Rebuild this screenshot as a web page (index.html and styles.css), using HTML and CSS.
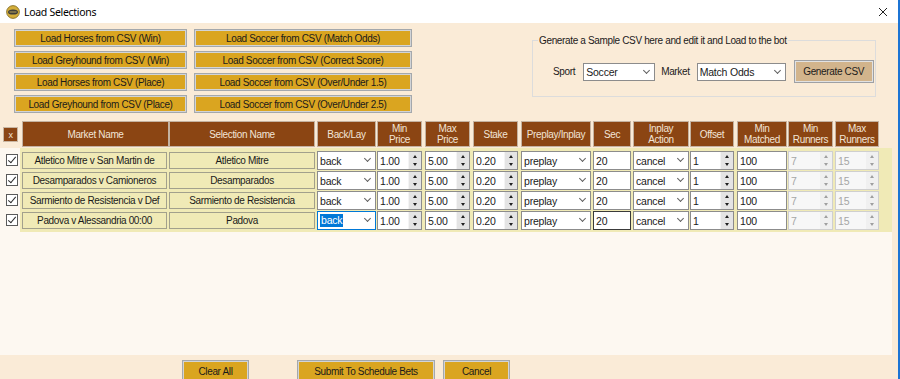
FILE: index.html
```html
<!DOCTYPE html>
<html>
<head>
<meta charset="utf-8">
<link rel="stylesheet" href="styles.css">
</head>
<body>
<div class="window">
  <div class="titlebar">
    <svg class="app-icon" viewBox="0 0 14 14" width="14" height="14">
      <circle cx="7" cy="7" r="6.4" fill="#d4ae3a" stroke="#7a6420" stroke-width="0.8"/>
      <ellipse cx="7" cy="7" rx="5" ry="2.6" fill="#3e3e3a"/>
      <rect x="3.5" y="6.5" width="7" height="1" fill="#b9a45a"/>
    </svg>
    <span class="title">Load Selections</span>
    <svg class="close" viewBox="0 0 8 8" width="8" height="8">
      <path d="M0 0L8 8M8 0L0 8" stroke="#222" stroke-width="1"/>
    </svg>
  </div>

  <div class="top">
    <div class="loadbtns">
      <div class="btn">Load Horses from CSV (Win)</div>
      <div class="btn">Load Soccer from CSV (Match Odds)</div>
      <div class="btn">Load Greyhound from CSV (Win)</div>
      <div class="btn">Load Soccer from CSV (Correct Score)</div>
      <div class="btn">Load Horses from CSV (Place)</div>
      <div class="btn">Load Soccer from CSV (Over/Under 1.5)</div>
      <div class="btn">Load Greyhound from CSV (Place)</div>
      <div class="btn">Load Soccer from CSV (Over/Under 2.5)</div>
    </div>
    <fieldset class="group">
      <legend>Generate a Sample CSV here and edit it and Load to the bot</legend>
      <div class="gen-row">
        <span class="lbl lbl-sport">Sport</span>
        <div class="combo combo-sport">Soccer</div>
        <span class="lbl lbl-market">Market</span>
        <div class="combo combo-market">Match Odds</div>
        <div class="btn btn-gen">Generate CSV</div>
      </div>
    </fieldset>
  </div>

  <div class="ghead">
    <div class="hx">x</div>
    <div class="hd c-market">Market Name</div>
    <div class="hd c-sel">Selection Name</div>
    <div class="hd c-back">Back/Lay</div>
    <div class="hd c-min">Min<br>Price</div>
    <div class="hd c-max">Max<br>Price</div>
    <div class="hd c-stake">Stake</div>
    <div class="hd c-pre">Preplay/Inplay</div>
    <div class="hd c-sec">Sec</div>
    <div class="hd c-act">Inplay<br>Action</div>
    <div class="hd c-off">Offset</div>
    <div class="hd c-mm">Min<br>Matched</div>
    <div class="hd c-minr">Min<br>Runners</div>
    <div class="hd c-maxr">Max<br>Runners</div>
  </div>

  <div class="panel">
    <div class="rows">
      <div class="row">
        <div class="chk"></div>
        <div class="cell c-market">Atletico Mitre v San Martin de</div>
        <div class="cell c-sel">Atletico Mitre</div>
        <div class="combo c-back">back</div>
        <div class="num c-min"><span>1.00</span><i class="spin"></i></div>
        <div class="num c-max"><span>5.00</span><i class="spin"></i></div>
        <div class="num c-stake"><span>0.20</span><i class="spin"></i></div>
        <div class="combo c-pre">preplay</div>
        <div class="txt c-sec">20</div>
        <div class="combo c-act">cancel</div>
        <div class="num c-off"><span>1</span><i class="spin"></i></div>
        <div class="txt c-mm">100</div>
        <div class="num dis c-minr"><span>7</span><i class="spin"></i></div>
        <div class="num dis c-maxr"><span>15</span><i class="spin"></i></div>
      </div>
      <div class="row">
        <div class="chk"></div>
        <div class="cell c-market">Desamparados v Camioneros</div>
        <div class="cell c-sel">Desamparados</div>
        <div class="combo c-back">back</div>
        <div class="num c-min"><span>1.00</span><i class="spin"></i></div>
        <div class="num c-max"><span>5.00</span><i class="spin"></i></div>
        <div class="num c-stake"><span>0.20</span><i class="spin"></i></div>
        <div class="combo c-pre">preplay</div>
        <div class="txt c-sec">20</div>
        <div class="combo c-act">cancel</div>
        <div class="num c-off"><span>1</span><i class="spin"></i></div>
        <div class="txt c-mm">100</div>
        <div class="num dis c-minr"><span>7</span><i class="spin"></i></div>
        <div class="num dis c-maxr"><span>15</span><i class="spin"></i></div>
      </div>
      <div class="row">
        <div class="chk"></div>
        <div class="cell c-market">Sarmiento de Resistencia v Def</div>
        <div class="cell c-sel">Sarmiento de Resistencia</div>
        <div class="combo c-back">back</div>
        <div class="num c-min"><span>1.00</span><i class="spin"></i></div>
        <div class="num c-max"><span>5.00</span><i class="spin"></i></div>
        <div class="num c-stake"><span>0.20</span><i class="spin"></i></div>
        <div class="combo c-pre">preplay</div>
        <div class="txt c-sec">20</div>
        <div class="combo c-act">cancel</div>
        <div class="num c-off"><span>1</span><i class="spin"></i></div>
        <div class="txt c-mm">100</div>
        <div class="num dis c-minr"><span>7</span><i class="spin"></i></div>
        <div class="num dis c-maxr"><span>15</span><i class="spin"></i></div>
      </div>
      <div class="row">
        <div class="chk"></div>
        <div class="cell c-market">Padova v Alessandria 00:00</div>
        <div class="cell c-sel">Padova</div>
        <div class="combo c-back focus"><span class="sel">back</span></div>
        <div class="num c-min"><span>1.00</span><i class="spin"></i></div>
        <div class="num c-max"><span>5.00</span><i class="spin"></i></div>
        <div class="num c-stake"><span>0.20</span><i class="spin"></i></div>
        <div class="combo c-pre">preplay</div>
        <div class="txt c-sec dark">20</div>
        <div class="combo c-act">cancel</div>
        <div class="num c-off"><span>1</span><i class="spin"></i></div>
        <div class="txt c-mm">100</div>
        <div class="num dis c-minr"><span>7</span><i class="spin"></i></div>
        <div class="num dis c-maxr"><span>15</span><i class="spin"></i></div>
      </div>
    </div>
  </div>

  <div class="footer">
    <div class="btn fb-clear">Clear All</div>
    <div class="btn fb-submit">Submit To Schedule Bets</div>
    <div class="btn fb-cancel">Cancel</div>
  </div>
</div>
</body>
</html>
```

FILE: styles.css
```css
* { box-sizing: border-box; }
html, body { margin: 0; padding: 0; }
body {
  width: 900px;
  height: 379px;
  overflow: hidden;
  background: #faebd7;
  font-family: "Liberation Sans", Arial, sans-serif;
  font-size: 10px;
  letter-spacing: -0.35px;
  color: #1a1a1a;
}
.window {
  width: 900px;
  height: 379px;
  border-right: 2px solid #1c74d4;
  display: flex;
  flex-direction: column;
  background: #faebd7;
}

/* title bar */
.titlebar {
  flex: none;
  height: 23px;
  background: #ffffff;
  display: flex;
  align-items: center;
  padding-left: 6px;
}
.app-icon { display: block; }
.title {
  margin-left: 4px;
  font-family: "Noto Sans", "Liberation Sans", sans-serif;
  font-size: 10.5px;
  letter-spacing: -0.3px;
  color: #000;
}
.close { margin-left: auto; margin-right: 11px; display: block; }

/* top area */
.top {
  flex: none;
  height: 98px;
  display: flex;
  align-items: flex-start;
  padding: 6px 22px 0 14px;
}
.loadbtns {
  display: grid;
  grid-template-columns: 173px 218px;
  grid-auto-rows: 18px;
  column-gap: 7px;
  row-gap: 4px;
}
.btn {
  background: #daa520;
  border: 1px solid #a4a8ac;
  box-shadow: inset 0 0 0 1px #d2d4d6;
  display: flex;
  align-items: center;
  justify-content: center;
  color: #1a1a1a;
  white-space: nowrap;
}
.group {
  margin: 5px 0 0 auto;
  width: 344px;
  height: 63px;
  border: 1px solid #dcdcdc;
  padding: 0 0 0 5px;
  min-width: 0;
}
.group legend {
  padding: 0 1px;
  line-height: 13px;
  color: #1a1a1a;
}
.gen-row {
  display: flex;
  align-items: center;
  margin-top: 13px;
  height: 23px;
}
.lbl { white-space: nowrap; }
.lbl-sport { margin-left: 15px; }
.combo-sport { margin-left: 8px; width: 72px; }
.lbl-market { margin-left: 6px; }
.combo-market { margin-left: 7px; width: 89px; }
.btn-gen {
  margin-left: 8px;
  width: 80px;
  height: 23px;
  background: #d2b48c;
  box-shadow: inset 0 0 0 1px #e2e2e2;
  border-color: #9ea0a4;
}

/* grid header */
.ghead {
  flex: none;
  height: 26px;
  display: flex;
  align-items: flex-start;
}
.hx {
  margin: 6px 0 0 3px;
  width: 15px;
  height: 15px;
  background: #8b4513;
  color: #f2e4d6;
  border: 1px solid #c9b6a2;
  display: flex;
  align-items: center;
  justify-content: center;
  font-size: 9px;
}
.hd {
  height: 26px;
  background: #8b4513;
  color: #f2e4d6;
  border: 1px solid #c4b2a0;
  display: flex;
  align-items: center;
  justify-content: center;
  text-align: center;
  line-height: 11px;
  white-space: nowrap;
}
.ghead .c-market { margin-left: 4px; width: 147px; }
.ghead .c-sel { margin-left: 0; }

/* column geometry */
.c-market { margin-left: 4px; width: 145px; }
.c-sel    { margin-left: 2px; width: 146px; }
.c-back   { margin-left: 2px; width: 59px; }
.c-min    { margin-left: 1px; width: 45px; }
.c-max    { margin-left: 3px; width: 45px; }
.c-stake  { margin-left: 3px; width: 45px; }
.c-pre    { margin-left: 3px; width: 70px; }
.c-sec    { margin-left: 2px; width: 38px; }
.c-act    { margin-left: 2px; width: 56px; }
.c-off    { margin-left: 1px; width: 44px; }
.c-mm     { margin-left: 3px; width: 50px; }
.c-minr   { margin-left: 1px; width: 45px; }
.c-maxr   { margin-left: 2px; width: 44px; }

/* rows panel */
.panel {
  flex: none;
  margin-top: 1px;
  width: 892px;
  height: 207px;
  background: #fdf8f1;
}
.rows {
  padding: 3px 0 1px 0;
  background: linear-gradient(to right, #fdf8f1 20px, #f0eab6 20px);
}
.row {
  height: 20px;
  display: flex;
  align-items: flex-start;
}
.chk {
  margin: 3px 0 0 6px;
  width: 12px;
  height: 12px;
  background: #fff;
  border: 1px solid #5a5a5a;
  position: relative;
}
.chk::after {
  content: "";
  position: absolute;
  left: 3px;
  top: 0px;
  width: 3px;
  height: 7px;
  border-right: 1.5px solid #2a2a2a;
  border-bottom: 1.5px solid #2a2a2a;
  transform: rotate(40deg);
}
.cell {
  margin-top: 1px;
  height: 17px;
  background: #f0eab6;
  border: 1px solid #a2a08c;
  display: flex;
  align-items: center;
  justify-content: center;
  white-space: nowrap;
  overflow: hidden;
}
.combo, .num, .txt {
  height: 19px;
  background: #fff;
  border: 1px solid #8c8c8c;
  display: flex;
  align-items: center;
  white-space: nowrap;
  position: relative;
  padding-left: 2px;
  font-size: 10.5px;
  letter-spacing: -0.2px;
}
.combo { padding-right: 14px; }
.combo::after {
  content: "";
  position: absolute;
  right: 5px;
  top: 4px;
  width: 4px;
  height: 4px;
  border-right: 1px solid #606060;
  border-bottom: 1px solid #606060;
  transform: rotate(45deg);
}
.gen-row .combo { height: 18px; }
.combo.focus { border-color: #0078d7; }
.sel { background: #0078d7; color: #fff; padding: 0 1px; line-height: 13px; }
.txt.dark { border-color: #3a3a3a; }
.num span { flex: 1; }
.spin {
  width: 13px;
  align-self: stretch;
  background: #e4e4e4;
  border-left: 1px solid #f4f4f4;
  position: relative;
}
.spin::before, .spin::after {
  content: "";
  position: absolute;
  left: 4px;
  width: 0;
  height: 0;
  border-left: 2.5px solid transparent;
  border-right: 2.5px solid transparent;
}
.spin::before { top: 3px; border-bottom: 3px solid #202020; }
.spin::after { bottom: 3px; border-top: 3px solid #202020; }
.num.dis { background: #f7f7f7; border-color: #cfcfcf; color: #a6a6a6; }
.num.dis .spin { background: #f0f0f0; border-left-color: #f7f7f7; }
.num.dis .spin::before { border-bottom-color: #a0a0a0; }
.num.dis .spin::after { border-top-color: #a0a0a0; }

/* footer */
.footer {
  flex: none;
  display: flex;
  padding-top: 5px;
}
.footer .btn { height: 22px; }
.fb-clear { margin-left: 182px; width: 67px; }
.fb-submit { margin-left: 48px; width: 138px; }
.fb-cancel { margin-left: 8px; width: 67px; }
```
